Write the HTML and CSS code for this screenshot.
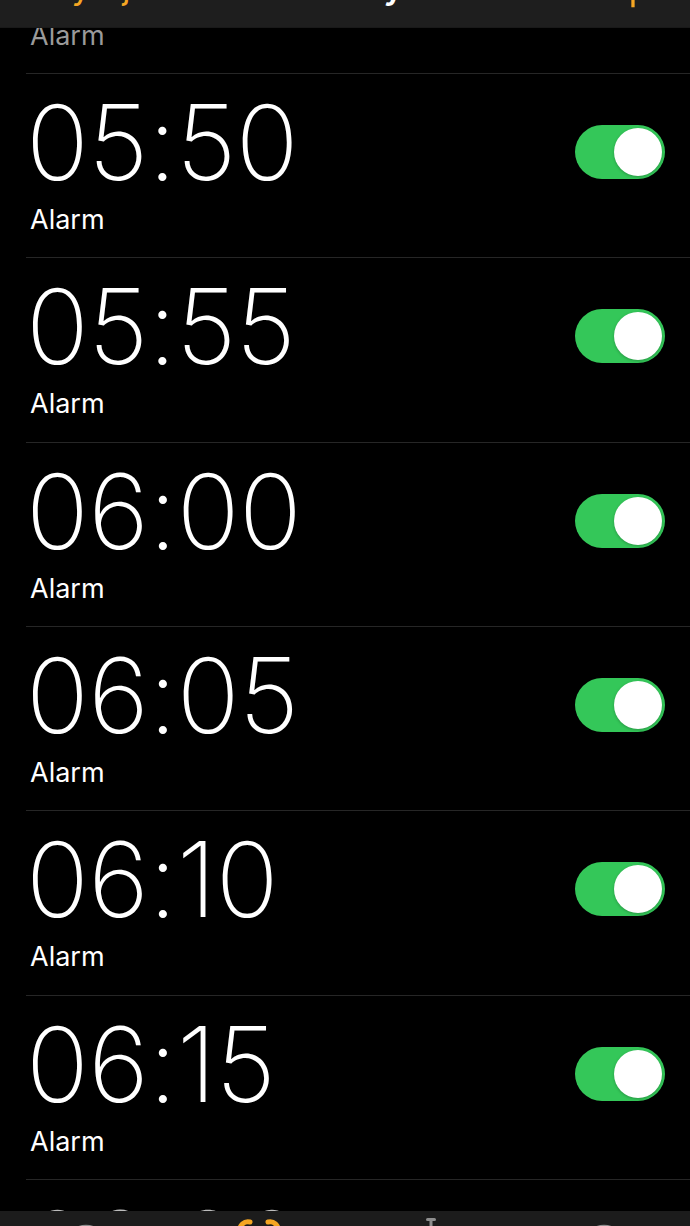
FILE: index.html
```html
<!DOCTYPE html>
<html lang="pl">
<head>
<meta charset="utf-8">
<title>Alarmy</title>
<link rel="stylesheet" href="styles.css">
</head>
<body>
<div class="screen">
  <header class="navbar">
    <div class="navbar-inner">
      <span class="nav-edit">Edytuj</span>
      <span class="nav-title">Alarmy</span>
      <span class="nav-add">+</span>
    </div>
  </header>

  <main class="list-viewport">
    <div class="list">
      <div class="row off">
        <div class="info"><div class="time">05:45</div><div class="label">Alarm</div></div>
        <div class="switch"><div class="knob"></div></div>
      </div>
      <div class="row">
        <div class="info"><div class="time">05:50</div><div class="label">Alarm</div></div>
        <div class="switch on"><div class="knob"></div></div>
      </div>
      <div class="row">
        <div class="info"><div class="time">05:55</div><div class="label">Alarm</div></div>
        <div class="switch on"><div class="knob"></div></div>
      </div>
      <div class="row">
        <div class="info"><div class="time">06:00</div><div class="label">Alarm</div></div>
        <div class="switch on"><div class="knob"></div></div>
      </div>
      <div class="row">
        <div class="info"><div class="time">06:05</div><div class="label">Alarm</div></div>
        <div class="switch on"><div class="knob"></div></div>
      </div>
      <div class="row">
        <div class="info"><div class="time">06:10</div><div class="label">Alarm</div></div>
        <div class="switch on"><div class="knob"></div></div>
      </div>
      <div class="row">
        <div class="info"><div class="time">06:15</div><div class="label">Alarm</div></div>
        <div class="switch on"><div class="knob"></div></div>
      </div>
      <div class="row dim">
        <div class="info"><div class="time">06:20</div><div class="label">Alarm</div></div>
        <div class="switch on"><div class="knob"></div></div>
      </div>
    </div>
  </main>

  <nav class="tabbar">
    <div class="tab tab-globe">
      <svg width="50" height="50" viewBox="0 0 50 50"><circle cx="25" cy="25" r="20" fill="none" stroke="#8e8e8e" stroke-width="2.5"/></svg>
    </div>
    <div class="tab tab-alarm">
      <svg width="50" height="50" viewBox="0 0 50 50">
        <path d="M6 14 A8 8 0 0 1 16 5" fill="none" stroke="#f5a623" stroke-width="5" stroke-linecap="round"/>
        <path d="M34 5 A8 8 0 0 1 44 14" fill="none" stroke="#f5a623" stroke-width="5" stroke-linecap="round"/>
        <circle cx="25" cy="28" r="15" fill="none" stroke="#f5a623" stroke-width="3"/>
      </svg>
    </div>
    <div class="tab tab-stopwatch">
      <svg width="50" height="50" viewBox="0 0 50 50">
        <rect x="23.5" y="1" width="3" height="8" fill="#8e8e8e"/>
        <rect x="20" y="1" width="10" height="3" rx="1.5" fill="#8e8e8e"/>
        <circle cx="25" cy="27" r="16" fill="none" stroke="#8e8e8e" stroke-width="2.5"/>
      </svg>
    </div>
    <div class="tab tab-timer">
      <svg width="50" height="50" viewBox="0 0 50 50"><circle cx="25" cy="25" r="20" fill="none" stroke="#8e8e8e" stroke-width="2.5"/></svg>
    </div>
  </nav>
</div>
</body>
</html>
```

FILE: styles.css
```css
* { box-sizing: border-box; }

html, body {
  margin: 0;
  padding: 0;
  background: #000;
}

body {
  font-family: Inter, "Noto Sans", "DejaVu Sans", sans-serif;
  color: #fff;
}

.screen {
  width: 690px;
  height: 1226px;
  display: flex;
  flex-direction: column;
  overflow: hidden;
  background: #000;
}

/* ---------- navigation bar (scrolled, only its bottom strip shows) ---------- */
.navbar {
  flex: 0 0 28px;
  height: 28px;
  background: #1e1e1e;
  border-bottom: 1px solid #191919;
  overflow: hidden;
}

.navbar-inner {
  margin-top: -30px;
  height: 34px;
  display: flex;
  align-items: baseline;
  justify-content: space-between;
  padding: 0 30px 0 30px;
  font-size: 34px;
  line-height: 34px;
}

.nav-edit {
  color: #f5a623;
  width: 130px;
}

.nav-title {
  color: #fff;
  font-weight: 600;
}

.nav-add {
  align-self: flex-start;
  margin-top: -4px;
  color: #f5a623;
  width: 130px;
  text-align: right;
  font-size: 52px;
  line-height: 52px;
  font-weight: 300;
  padding-right: 10px;
}

/* ---------- list ---------- */
.list-viewport {
  flex: 1 1 auto;
  overflow: hidden;
  min-height: 0;
}

.list {
  margin-top: -138.33px;
}

.row {
  height: 184.33px;
  margin-left: 26px;
  padding: 16px 25px 0 0;
  border-bottom: 1px solid #262626;
  display: flex;
  justify-content: space-between;
  align-items: flex-start;
}

.info {
  display: flex;
  flex-direction: column;
}

.time {
  font-size: 104px;
  line-height: 104px;
  font-weight: 200;
  letter-spacing: -0.5px;
}

.label {
  margin-top: 12px;
  font-size: 27px;
  line-height: 27px;
  font-weight: 400;
  padding-left: 4px;
}

.row.off .time,
.row.off .label {
  color: #9a9a9a;
}

.row.dim .time {
  color: #bdbdbd;
}

/* ---------- switch ---------- */
.switch {
  margin-top: 35px;
  width: 90px;
  height: 54px;
  border-radius: 27px;
  background: #3a3a3c;
  padding: 3px;
  display: flex;
  justify-content: flex-start;
}

.switch.on {
  background: #34c759;
  justify-content: flex-end;
}

.knob {
  width: 48px;
  height: 48px;
  border-radius: 50%;
  background: #fff;
  box-shadow: 0 1px 3px rgba(0, 0, 0, 0.25);
}

/* ---------- tab bar (only its top strip shows) ---------- */
.tabbar {
  flex: 0 0 15px;
  height: 15px;
  background: #1c1c1c;
  display: flex;
  overflow: hidden;
}

.tab {
  flex: 1 1 0;
  display: flex;
  justify-content: center;
  align-items: flex-start;
}

.tab svg { display: block; flex: none; }

.tab-globe svg { margin-top: 10px; }
.tab-alarm svg { margin-top: 6px; }
.tab-stopwatch svg { margin-top: 6px; }
.tab-timer svg { margin-top: 10px; }
```
